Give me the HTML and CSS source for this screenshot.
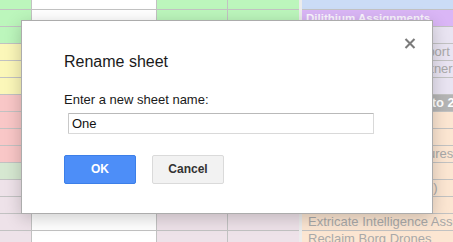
FILE: index.html
```html
<!DOCTYPE html>
<html>
<head>
<meta charset="utf-8">
<link rel="stylesheet" href="styles.css">
</head>
<body>
<div class="sheet">
  <div class="row first green"><div class="cell a"></div><div class="cell b"></div><div class="cell c"></div><div class="cell d"></div><div class="strip"></div><div class="cell e blue"></div></div>
  <div class="row green"><div class="cell a"></div><div class="cell b"></div><div class="cell c"></div><div class="cell d"></div><div class="strip"></div><div class="cell e purple">Dilithium Assignments</div></div>
  <div class="row green"><div class="cell a"></div><div class="cell b"></div><div class="cell c"></div><div class="cell d"></div><div class="strip"></div><div class="cell e lav"></div></div>
  <div class="row yellow"><div class="cell a"></div><div class="cell b"></div><div class="cell c"></div><div class="cell d"></div><div class="strip"></div><div class="cell e lav">Provide Security Support</div></div>
  <div class="row yellow"><div class="cell a"></div><div class="cell b"></div><div class="cell c"></div><div class="cell d"></div><div class="strip"></div><div class="cell e lav">Find a Diplomatic Partner</div></div>
  <div class="row yellow"><div class="cell a"></div><div class="cell b"></div><div class="cell c"></div><div class="cell d"></div><div class="strip"></div><div class="cell e lav"></div></div>
  <div class="row red"><div class="cell a"></div><div class="cell b"></div><div class="cell c"></div><div class="cell d"></div><div class="strip"></div><div class="cell e grayhead">Missions: Levels 10 to 20</div></div>
  <div class="row red"><div class="cell a"></div><div class="cell b"></div><div class="cell c"></div><div class="cell d"></div><div class="strip"></div><div class="cell e peach"></div></div>
  <div class="row red"><div class="cell a"></div><div class="cell b"></div><div class="cell c"></div><div class="cell d"></div><div class="strip"></div><div class="cell e peach"></div></div>
  <div class="row red"><div class="cell a"></div><div class="cell b"></div><div class="cell c"></div><div class="cell d"></div><div class="strip"></div><div class="cell e peach">Repair Station Structures</div></div>
  <div class="row mint"><div class="cell a"></div><div class="cell b"></div><div class="cell c"></div><div class="cell d"></div><div class="strip"></div><div class="cell e peach"></div></div>
  <div class="row pink"><div class="cell a"></div><div class="cell b"></div><div class="cell c"></div><div class="cell d"></div><div class="strip"></div><div class="cell e peach">Escort Convoy (Tier 3)</div></div>
  <div class="row pink"><div class="cell a"></div><div class="cell b"></div><div class="cell c"></div><div class="cell d"></div><div class="strip"></div><div class="cell e peach"></div></div>
  <div class="row pink"><div class="cell a"></div><div class="cell b"></div><div class="cell c"></div><div class="cell d"></div><div class="strip"></div><div class="cell e peach">Extricate Intelligence Assets</div></div>
  <div class="row pink"><div class="cell a"></div><div class="cell b"></div><div class="cell c"></div><div class="cell d"></div><div class="strip"></div><div class="cell e peach">Reclaim Borg Drones</div></div>
</div>

<div class="dialog" role="dialog">
  <div class="title">Rename sheet</div>
  <svg class="close" width="12" height="11" viewBox="0 0 12 11" aria-label="Close">
    <path d="M1.5 1 L10.5 10 M10.5 1 L1.5 10" stroke="#7b7b7b" stroke-width="2.1" fill="none"/>
  </svg>
  <div class="label">Enter a new sheet name:</div>
  <input class="name" type="text" value="One">
  <div class="buttons">
    <button class="btn ok">OK</button><button class="btn cancel">Cancel</button>
  </div>
</div>
</body>
</html>
```
FILE: styles.css
```css
* { box-sizing: border-box; }
html, body { margin: 0; padding: 0; }
body {
  width: 453px;
  height: 242px;
  overflow: hidden;
  position: relative;
  background: #fff;
  font-family: "Liberation Sans", Arial, sans-serif;
}

.sheet { display: flex; flex-direction: column; }
.row {
  display: grid;
  grid-template-columns: 32px 125px 71px 71px 3px 1fr;
  height: 17px;
  flex: none;
}
.row.first { height: 10px; }

.green { --bg: #bcf6bc; }
.yellow { --bg: #fbf7b9; }
.red { --bg: #f9c7c7; }
.mint { --bg: #d6e8d1; }
.pink { --bg: #eee2e9; }

.cell {
  border-bottom: 1px solid #c2c2c2;
  border-right: 1px solid #c2c2c2;
  overflow: hidden;
  white-space: nowrap;
  font-size: 13px;
  line-height: 16px;
}
.a, .c, .d { background: var(--bg); }
.b { background: #fff; }
.d { border-right: none; }
.strip { background: #ececec; }

.e { border-right: none; padding-left: 4px; color: #a9a9a9; }
.blue { background: #cbdcf6; }
.purple { background: #dab6f6; color: #fbf6ff; font-weight: bold; font-size: 11.5px; }
.lav { background: #e9e4f2; }
.grayhead { background: #b5b5b5; color: #fff; font-weight: bold; }
.peach { background: #fce6d2; padding-left: 6px; }

.dialog {
  position: absolute;
  left: 21px;
  top: 20px;
  width: 412px;
  height: 194px;
  background: #fff;
  border: 1px solid #acacac;
  box-shadow: 0 4px 16px rgba(0, 0, 0, 0.2);
  padding: 29px 42px 29px 42px;
  color: #222;
}
.title {
  font-size: 16px;
  line-height: 24px;
  margin-bottom: 18px;
  color: #1a1a1a;
}
.close {
  position: absolute;
  top: 17px;
  right: 16px;
  display: block;
}
.label {
  font-size: 13px;
  line-height: 16px;
  color: #1a1a1a;
}
.name {
  display: block;
  margin: 5px 0 0 4px;
  width: 306px;
  height: 21px;
  padding: 0 3px;
  border: 1px solid #d9d9d9;
  border-top-color: #b9b9b9;
  border-left-color: #c9c9c9;
  border-radius: 1px;
  font-family: "Liberation Sans", Arial, sans-serif;
  font-size: 13px;
  color: #111;
  background: #fff;
  outline: none;
}
.buttons { display: flex; margin-top: 21px; }
.btn {
  height: 29px;
  min-width: 72px;
  padding: 0 8px;
  margin: 0 16px 0 0;
  border: 1px solid;
  border-radius: 2px;
  font-family: "Liberation Sans", Arial, sans-serif;
  font-weight: bold;
  font-size: 12px;
  line-height: 27px;
  text-align: center;
}
.ok { background: #4d8ef8; border-color: #3c7fe8; color: #fff; }
.cancel { background: #f2f2f2; border-color: #dadada; color: #333; }
```
